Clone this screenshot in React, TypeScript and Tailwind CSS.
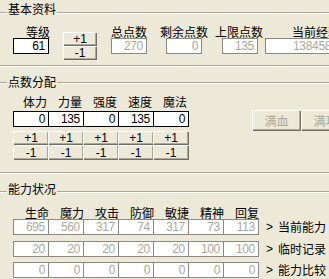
import React from "react";

const boxBase =
  "h-[16px] border bg-white text-right pr-[3px] leading-[14px] font-['Liberation_Sans',sans-serif] text-[12px] tracking-[-0.3px] overflow-hidden whitespace-nowrap";

function Box({ v, on, cls = "" }: { v: string; on?: boolean; cls?: string }) {
  return (
    <div
      className={
        boxBase +
        " " +
        (on ? "border-black text-black" : "border-[#8c8a80] text-[#aca899]") +
        " " +
        cls
      }
    >
      {v}
    </div>
  );
}

const btnBase =
  "flex items-center justify-center bg-[#ECE9D8] shadow-[inset_1px_1px_0_#ffffff,inset_-1px_-1px_0_#716f64,inset_-2px_-2px_0_#aca899] text-[12px] leading-none";

function Btn({ t, cls }: { t: string; cls: string }) {
  return <div className={btnBase + " text-black font-['Liberation_Sans',sans-serif] " + cls}>{t}</div>;
}

function Line({ cls }: { cls: string }) {
  return <div className={"h-[2px] border-t border-b border-t-[#aca899] border-b-white " + cls} />;
}

function Header({ title, lineCls }: { title: string; lineCls: string }) {
  return (
    <div className="flex h-[12px]">
      <Line cls={"w-[7px] shrink-0 " + lineCls} />
      <div className="px-[1px] leading-[12px] whitespace-nowrap">{title}</div>
      <Line cls={"flex-1 " + lineCls} />
    </div>
  );
}

export default function App() {
  const pts = [
    ["体力", "0"],
    ["力量", "135"],
    ["强度", "0"],
    ["速度", "135"],
    ["魔法", "0"],
  ];
  const abil = ["生命", "魔力", "攻击", "防御", "敏捷", "精神", "回复"];
  const rows: [string[], string][] = [
    [["695", "560", "317", "74", "317", "73", "113"], "当前能力"],
    [["20", "20", "20", "20", "20", "100", "100"], "临时记录"],
    [["0", "0", "0", "0", "0", "0", "0"], "能力比较"],
  ];
  return (
    <div className="w-[329px] h-[279px] overflow-hidden bg-[#ECE9D8] font-['Noto_Sans_CJK_SC',sans-serif] text-[12px] text-black">
      {/* Group 1 */}
      <div className="pt-[3px]">
        <Header title="基本资料" lineCls="mt-[9px]" />
      </div>
      <div className="flex mt-[11px] pl-[13px] items-start">
        <div className="w-[36px] shrink-0">
          <div className="leading-[12px] text-right -mr-[1px]">等级</div>
          <Box v="61" on />
        </div>
        <div className="w-[34px] ml-[14px] mt-[6px] shrink-0">
          <Btn t="+1" cls="h-[14px]" />
          <Btn t="-1" cls="h-[14px]" />
        </div>
        <div className="w-[36px] ml-[14px] shrink-0">
          <div className="leading-[12px] text-right">总点数</div>
          <Box v="270" />
        </div>
        <div className="w-[48px] ml-[13px] shrink-0">
          <div className="leading-[12px] text-center whitespace-nowrap">剩余点数</div>
          <Box v="0" cls="w-[36px] ml-[6px]" />
        </div>
        <div className="w-[48px] ml-[7px] shrink-0">
          <div className="leading-[12px] text-center whitespace-nowrap">上限点数</div>
          <Box v="135" cls="w-[36px] ml-[7px]" />
        </div>
        <div className="w-[102px] ml-[2px] shrink-0">
          <div className="leading-[12px] text-center whitespace-nowrap">当前经验</div>
          <div className="h-[16px] border border-[#8c8a80] bg-white text-[#aca899] leading-[14px] font-['Liberation_Sans',sans-serif] text-[12px] tracking-[-0.3px] pl-[27px] whitespace-nowrap overflow-hidden">
            138458
          </div>
        </div>
      </div>
      <Line cls="mt-[5px] w-full" />

      {/* Group 2 */}
      <div className="mt-[9px]">
        <Header title="点数分配" lineCls="mt-[6px]" />
      </div>
      <div className="flex mt-[8px] pl-[13px] items-start">
        <div className="flex shrink-0">
          {pts.map(([l, v], i) => (
            <div key={l} className={"w-[36px] shrink-0 " + (i > 0 ? "-ml-[1px]" : "")}>
              <div className="leading-[12px] text-right pr-[2px]">{l}</div>
              <Box v={v} on cls="mt-[3px]" />
              <Btn t="+1" cls="h-[14px] mt-[4px]" />
              <Btn t="-1" cls="h-[15px]" />
            </div>
          ))}
        </div>
        <div className="flex ml-[63px] mt-[14px] shrink-0">
          <div className={btnBase + " w-[49px] h-[21px] text-[#aca899]"}>满血</div>
          <div className={btnBase + " w-[49px] h-[21px] text-[#aca899]"}>满功</div>
        </div>
      </div>
      <Line cls="mt-[12px] w-full" />

      {/* Group 3 */}
      <div className="mt-[9px]">
        <Header title="能力状况" lineCls="mt-[8px]" />
      </div>
      <div className="mt-[12px] pl-[13px]">
        <div className="flex">
          {abil.map((l, i) => (
            <div key={l} className={"w-[36px] shrink-0 leading-[12px] text-right " + (i > 0 ? "-ml-[1px]" : "")}>
              {l}
            </div>
          ))}
        </div>
        {rows.map(([vals, label], r) => (
          <div key={label} className={"flex items-center " + (r === 0 ? "" : r === 1 ? "mt-[6px]" : "mt-[5px]")}>
            {vals.map((v, i) => (
              <Box key={i} v={v} cls={"w-[36px] shrink-0 " + (i > 0 ? "-ml-[1px]" : "")} />
            ))}
            <div className="ml-[7px] font-['Liberation_Sans',sans-serif] leading-[12px]">&gt;</div>
            <div className="ml-[5px] leading-[12px] whitespace-nowrap">{label}</div>
          </div>
        ))}
      </div>
    </div>
  );
}
